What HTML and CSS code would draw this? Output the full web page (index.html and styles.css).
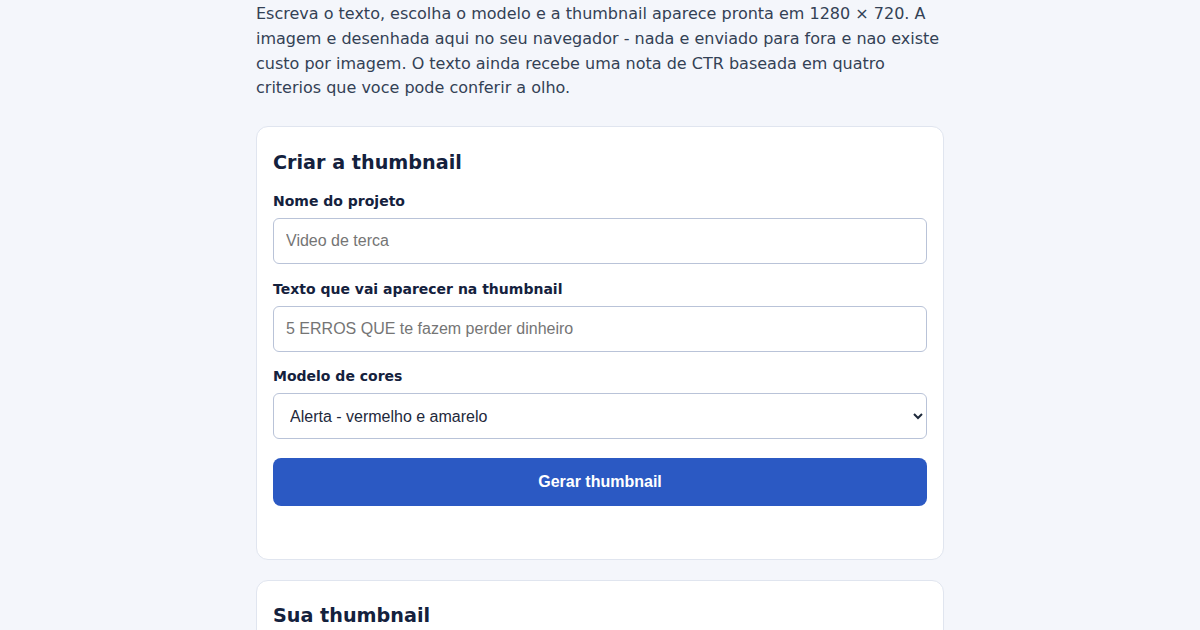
FILE: index.html
```html
<!DOCTYPE html>
<html lang="pt">
<head>
<meta charset="utf-8">
<title>Criar a thumbnail</title>
<link rel="stylesheet" href="styles.css">
</head>
<body>
<main class="page">
  <p class="intro">Escreva o texto, escolha o modelo e a thumbnail aparece pronta em 1280 × 720. A imagem e desenhada aqui no seu navegador - nada e enviado para fora e nao existe custo por imagem. O texto ainda recebe uma nota de CTR baseada em quatro criterios que voce pode conferir a olho.</p>

  <section class="card">
    <h2 class="card-title">Criar a thumbnail</h2>
    <div class="field">
      <label class="label" for="nome">Nome do projeto</label>
      <input class="control" id="nome" type="text" placeholder="Video de terca">
    </div>
    <div class="field">
      <label class="label" for="texto">Texto que vai aparecer na thumbnail</label>
      <input class="control" id="texto" type="text" placeholder="5 ERROS QUE te fazem perder dinheiro">
    </div>
    <div class="field field-last">
      <label class="label" for="modelo">Modelo de cores</label>
      <select class="control select" id="modelo">
        <option>Alerta - vermelho e amarelo</option>
        <option>Calmo - azul e branco</option>
        <option>Escuro - preto e verde</option>
      </select>
    </div>
    <button class="btn" type="button">Gerar thumbnail</button>
    <div class="status"></div>
  </section>

  <section class="card">
    <h2 class="card-title">Sua thumbnail</h2>
    <div class="preview"></div>
  </section>
</main>
</body>
</html>
```

FILE: styles.css
```css
html, body {
  margin: 0;
  padding: 0;
  background: #f4f6fb;
}

body {
  font-family: "DejaVu Sans", "Noto Sans", sans-serif;
  color: #334155;
}

.page {
  max-width: 688px;
  margin: 0 auto;
  display: flex;
  flex-direction: column;
  gap: 20px;
}

.intro {
  margin: 2px 0 5px;
  font-size: 16px;
  line-height: 24.8px;
  color: #334155;
}

.card {
  background: #ffffff;
  border: 1px solid #e0e5ef;
  border-radius: 12px;
  padding: 21.5px 16px 20px;
  display: flex;
  flex-direction: column;
}

.card-title {
  margin: 0 0 12.5px;
  font-size: 19.2px;
  line-height: 28px;
  font-weight: bold;
  color: #14213d;
}

.field {
  display: flex;
  flex-direction: column;
  margin-bottom: 12.5px;
}

.field-last {
  margin-bottom: 18.5px;
}

.label {
  font-size: 14px;
  line-height: 25px;
  font-weight: bold;
  color: #14213d;
  margin-bottom: 4px;
}

.control {
  box-sizing: border-box;
  height: 46px;
  width: 100%;
  margin: 0;
  padding: 0 12px;
  border: 1px solid #b9c3d8;
  border-radius: 6px;
  background: #ffffff;
  font-family: "Liberation Sans", Arial, sans-serif;
  font-size: 16px;
  color: #1e293b;
}

.control::placeholder {
  color: #757575;
}

.select {
  padding: 0 8px 0 12px;
}

.btn {
  height: 48px;
  width: 100%;
  border: none;
  border-radius: 8px;
  background: #2b59c3;
  color: #ffffff;
  font-family: "Liberation Sans", Arial, sans-serif;
  font-size: 16px;
  font-weight: bold;
}

.status {
  min-height: 21px;
  margin-top: 12px;
}

.preview {
  height: 200px;
}
```
